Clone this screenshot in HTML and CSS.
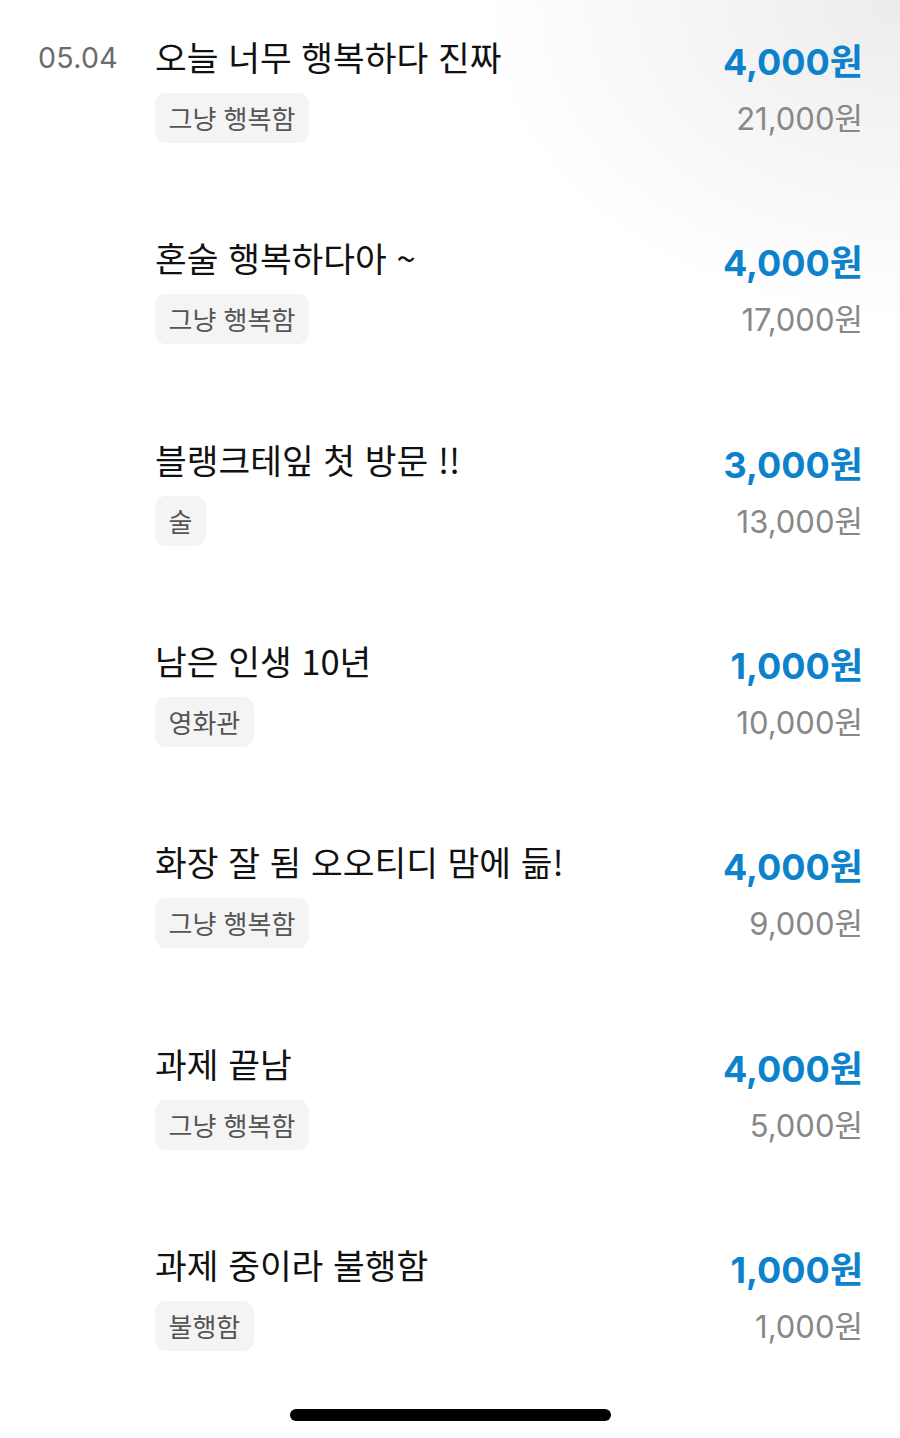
FILE: index.html
```html
<!DOCTYPE html>
<html lang="ko">
<head>
<meta charset="utf-8">
<link rel="stylesheet" href="styles.css">
</head>
<body>
<div class="screen">
  <ul class="list">
    <li class="row">
      <div class="date">05.04</div>
      <div class="main">
        <div class="title">오늘 너무 행복하다 진짜</div>
        <span class="tag">그냥 행복함</span>
      </div>
      <div class="amounts">
        <div class="amount">4,000원</div>
        <div class="total">21,000원</div>
      </div>
    </li>
    <li class="row">
      <div class="date"></div>
      <div class="main">
        <div class="title">혼술 행복하다아 ~</div>
        <span class="tag">그냥 행복함</span>
      </div>
      <div class="amounts">
        <div class="amount">4,000원</div>
        <div class="total">17,000원</div>
      </div>
    </li>
    <li class="row">
      <div class="date"></div>
      <div class="main">
        <div class="title">블랭크테잎 첫 방문 !!</div>
        <span class="tag">술</span>
      </div>
      <div class="amounts">
        <div class="amount">3,000원</div>
        <div class="total">13,000원</div>
      </div>
    </li>
    <li class="row">
      <div class="date"></div>
      <div class="main">
        <div class="title">남은 인생 10년</div>
        <span class="tag">영화관</span>
      </div>
      <div class="amounts">
        <div class="amount">1,000원</div>
        <div class="total">10,000원</div>
      </div>
    </li>
    <li class="row">
      <div class="date"></div>
      <div class="main">
        <div class="title">화장 잘 됨 오오티디 맘에 듦!</div>
        <span class="tag">그냥 행복함</span>
      </div>
      <div class="amounts">
        <div class="amount">4,000원</div>
        <div class="total">9,000원</div>
      </div>
    </li>
    <li class="row">
      <div class="date"></div>
      <div class="main">
        <div class="title">과제 끝남</div>
        <span class="tag">그냥 행복함</span>
      </div>
      <div class="amounts">
        <div class="amount">4,000원</div>
        <div class="total">5,000원</div>
      </div>
    </li>
    <li class="row">
      <div class="date"></div>
      <div class="main">
        <div class="title">과제 중이라 불행함</div>
        <span class="tag">불행함</span>
      </div>
      <div class="amounts">
        <div class="amount">1,000원</div>
        <div class="total">1,000원</div>
      </div>
    </li>
  </ul>
  <div class="home-indicator"></div>
</div>
</body>
</html>
```
FILE: styles.css
```css
html, body {
  margin: 0;
  padding: 0;
}
body {
  width: 900px;
  height: 1438px;
  overflow: hidden;
  background: #fff;
  font-family: "Inter", "Noto Sans CJK KR", sans-serif;
}
.screen {
  position: relative;
  width: 900px;
  height: 1438px;
  background:
    radial-gradient(ellipse 420px 320px at 100% 0%, #ececec 0%, rgba(255,255,255,0) 100%),
    #fff;
}
.list {
  list-style: none;
  margin: 0;
  padding: 36px 37px 0 38px;
  display: flex;
  flex-direction: column;
  gap: 94.33px;
}
.row {
  display: grid;
  grid-template-columns: 117px 1fr auto;
  align-items: start;
  height: 107px;
}
.date {
  font-size: 28.5px;
  line-height: 40px;
  padding-top: 2px;
  color: #6b6b6b;
  letter-spacing: 0.3px;
}
.main {
  display: flex;
  flex-direction: column;
  align-items: flex-start;
  gap: 17px;
}
.title {
  font-size: 34.5px;
  line-height: 40px;
  color: #111;
  font-family: "Noto Sans CJK KR", "Inter", sans-serif;
}
.tag {
  display: inline-block;
  height: 50px;
  line-height: 50px;
  padding: 0 13.5px;
  border-radius: 11px;
  background: #f4f4f4;
  color: #555;
  font-size: 26px;
  font-family: "Noto Sans CJK KR", sans-serif;
}
.amounts {
  display: flex;
  flex-direction: column;
  align-items: flex-end;
  padding-top: 6px;
  gap: 19px;
}
.amount {
  font-size: 36px;
  line-height: 40px;
  font-weight: 700;
  color: #0d82cc;
}
.total {
  font-size: 31px;
  line-height: 36px;
  color: #888;
}
.home-indicator {
  position: absolute;
  left: 290px;
  top: 1409px;
  width: 321px;
  height: 12px;
  border-radius: 6px;
  background: #000;
}
```
